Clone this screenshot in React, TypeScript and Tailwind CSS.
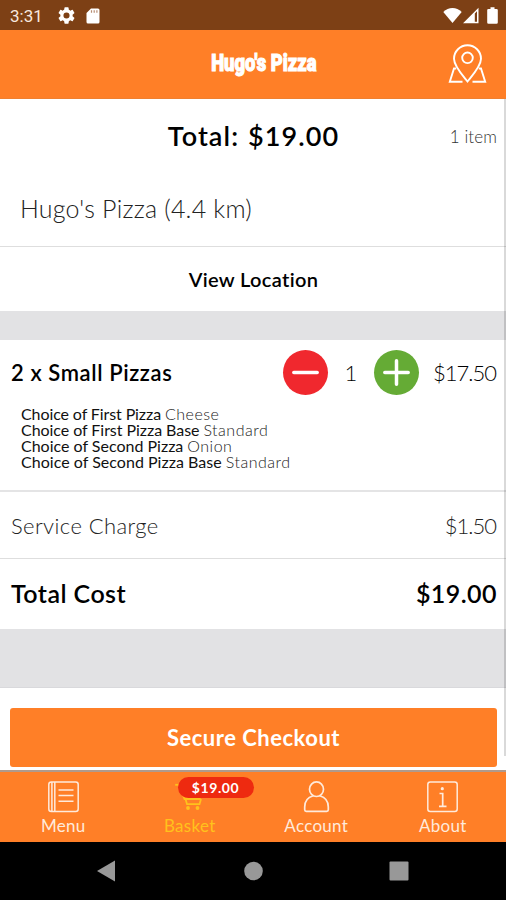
import type { ReactNode } from "react";

const choices = [
  { label: "Choice of First Pizza", value: "Cheese", spacing: "tracking-[-0.1px]" },
  { label: "Choice of First Pizza Base", value: "Standard", spacing: "tracking-[-0.05px]" },
  { label: "Choice of Second Pizza", value: "Onion", spacing: "tracking-[0px]" },
  { label: "Choice of Second Pizza Base", value: "Standard", spacing: "tracking-[0.03px]" },
];

function StatusBar() {
  return (
    <div className="flex h-[30px] items-center bg-[#7d4015] pr-[8px] pl-[10px] text-white">
      <span className="w-[48px] pt-[2px] font-[Roboto] text-[17px] leading-none text-[#f8e8df]">3:31</span>
      <svg className="mt-[1px]" width="17" height="17" viewBox="2 2 20 20" fill="currentColor">
        <path fillRule="evenodd" d="M19.14 12.94c.04-.3.06-.61.06-.94s-.02-.64-.07-.94l2.03-1.58a.49.49 0 0 0 .12-.61l-1.92-3.32a.49.49 0 0 0-.59-.22l-2.39.96a7 7 0 0 0-1.62-.94l-.36-2.54a.48.48 0 0 0-.48-.41h-3.84a.48.48 0 0 0-.47.41l-.36 2.54c-.59.24-1.13.57-1.62.94l-2.39-.96a.48.48 0 0 0-.59.22L2.73 8.87a.48.48 0 0 0 .12.61l2.03 1.58a7 7 0 0 0 0 1.88l-2.03 1.58a.49.49 0 0 0-.12.61l1.92 3.32c.12.22.37.29.59.22l2.39-.96c.5.38 1.03.7 1.62.94l.36 2.54c.05.24.24.41.48.41h3.84c.24 0 .44-.17.47-.41l.36-2.54a7 7 0 0 0 1.62-.94l2.39.96c.22.08.47 0 .59-.22l1.92-3.32a.48.48 0 0 0-.12-.61zM12 15.6A3.6 3.6 0 1 1 12 8.4a3.6 3.6 0 0 1 0 7.2z" />
      </svg>
      <svg className="mt-[1px] ml-[11px]" width="14" height="16" viewBox="0 0 14 16">
        <path d="M5 .5H12Q13.5 .5 13.5 2V14Q13.5 15.5 12 15.5H2Q.5 15.5 .5 14V5Z" fill="currentColor" />
        <path d="M5.5 2.3v2.4M8.2 2.3v2.4M10.9 2.3v2.4" stroke="#b78d72" strokeWidth="1.2" />
      </svg>
      <svg className="ml-auto" width="19" height="17" viewBox="0 0 19 17" fill="currentColor">
        <path d="M9.5 16L.3 5Q4.3 1 9.5 1T18.7 5Z" />
      </svg>
      <svg className="ml-[1px]" width="16" height="17" viewBox="0 0 16 17">
        <path fillRule="evenodd" d="M15.5 .8V16.3H0ZM11.8 6.5V14.7H14V4.2Z" fill="currentColor" />
      </svg>
      <svg className="ml-[8px]" width="11" height="17" viewBox="0 0 11 17" fill="currentColor">
        <path d="M3.5 .3h4v1.6h2Q10.8 1.9 10.8 3.1V15.4Q10.8 16.7 9.5 16.7h-8Q.2 16.7 .2 15.4V3.1Q.2 1.9 1.5 1.9h2Z" />
      </svg>
    </div>
  );
}

function Header() {
  return (
    <header className="grid h-[69px] grid-cols-[1fr_auto_1fr] items-center border-b border-[#ef8030] bg-[#ff7f27] text-white">
      <span />
      <h1 className="flex w-[132px] justify-center pl-[21px] font-[Roboto] text-[23px] font-black whitespace-nowrap [-webkit-text-stroke:1.1px_white]">
        <span className="scale-x-[0.8]">Hugo's Pizza</span>
      </h1>
      <svg className="mr-[19px] justify-self-end" width="39" height="40" viewBox="0 0 39 40" fill="none" stroke="white" strokeWidth="1.9">
        <path d="M19.5 37.5C16 33 6 22.5 6 14.8a13.5 13.5 0 0 1 27 0C33 22.5 23 33 19.5 37.5Z" />
        <circle cx="19.5" cy="13.8" r="5.3" />
        <path d="M8.2 24.5H6L1.8 37.7H14.5M30.8 24.5H33L37.2 37.7H24.5" />
      </svg>
    </header>
  );
}

function RoundButton({ color, label, plus }: { color: string; label: string; plus?: boolean }) {
  return (
    <button aria-label={label} className={`flex size-[45px] items-center justify-center rounded-full ${color}`}>
      <svg width="27" height="27" viewBox="0 0 27 27" stroke="white" strokeWidth="3.5" strokeLinecap="round">
        <path d={plus ? "M1.8 13.5h23.4M13.5 1.8v23.4" : "M1.8 13.5h23.4"} />
      </svg>
    </button>
  );
}

function Tab({ label, active, children }: { label: string; active?: boolean; children: ReactNode }) {
  return (
    <div className={`relative flex flex-1 flex-col items-center pt-[9px] ${active ? "text-[#ffc21c]" : "text-[#ffeadb]"}`}>
      {children}
      <span className="mt-[3px] text-[17px] leading-[20px] tracking-[0.3px]">{label}</span>
    </div>
  );
}

export default function App() {
  return (
    <div className="flex h-[900px] w-[506px] flex-col overflow-hidden bg-white font-[Lato,sans-serif] text-black">
      <StatusBar />
      <Header />
      <main className="relative h-[671px]">
        <section className="flex h-[148px] flex-col border-b border-[#dedede]">
          <div className="grid h-[74px] grid-cols-[1fr_auto_1fr] items-center pr-[9px]">
            <span />
            <h2 className="-mr-[10px] text-[27px] font-semibold tracking-[1.1px] [word-spacing:1px]">Total: $19.00</h2>
            <span className="pt-[2px] text-right text-[17px] font-light tracking-[0.1px] text-[#333]">1 item</span>
          </div>
          <p className="pt-[17px] pl-[20px] text-[25px] font-light tracking-[0.2px] text-[#222]">Hugo's Pizza (4.4 km)</p>
        </section>
        <section className="flex h-[64px] items-center justify-center pb-[1px] pl-[1px] text-[20px] font-semibold tracking-[0.35px]">View Location</section>
        <div className="h-[29px] bg-[#e2e2e4]" />
        <section className="h-[152px] border-b-2 border-[#e4e4e5] pt-[10px]">
          <div className="flex items-center pr-[9px] pl-[11px]">
            <h3 className="w-[272px] text-[22px] font-semibold tracking-[0.6px]">2 x Small Pizzas</h3>
            <RoundButton color="bg-[#f0282e]" label="Remove one" />
            <span className="w-[46px] text-center text-[22px] font-light">1</span>
            <RoundButton color="bg-[#65ab35]" label="Add one" plus />
            <span className="mr-[1px] ml-auto pb-[1px] text-[22px] font-light tracking-[-1px]">$17.50</span>
          </div>
          <ul className="pt-[11px] pl-[21px] text-[16px] leading-[16px] whitespace-nowrap text-[#111]">
            {choices.map((choice) => (
              <li key={choice.label} className="flex gap-[4px]">
                <span className={choice.spacing}>{choice.label}</span>
                <span className="font-light tracking-[0.5px] text-[#222]">{choice.value}</span>
              </li>
            ))}
          </ul>
        </section>
        <div className="flex h-[67px] items-center justify-between border-b border-[#dedede] pr-[9px] pl-[11px] text-[22px] font-light text-[#222]">
          <span className="tracking-[0.4px]">Service Charge</span>
          <span className="mr-[1px] tracking-[-1px]">$1.50</span>
        </div>
        <div className="flex h-[70px] items-center justify-between pr-[9px] pl-[11px] text-[25px] font-semibold tracking-[0.45px]">
          <span>Total Cost</span>
          <span>$19.00</span>
        </div>
        <div className="h-[59px] border-b border-[#d9d9dc] bg-[#e2e2e4]" />
        <div className="pt-[20px] pr-[9px] pl-[10px]">
          <button className="flex h-[59px] w-full items-center justify-center rounded-[3px] bg-[#ff7f27] text-[22px] font-bold tracking-[0.5px] text-white">Secure Checkout</button>
        </div>
        <div className="absolute top-0 right-0 h-[657px] w-[2px] bg-black/15" />
      </main>
      <nav className="flex h-[72px] border-t-2 border-[#b09a8c] bg-[#ff7f27]">
        <Tab label="Menu">
          <svg width="31" height="32" viewBox="0 0 31 32" fill="none" stroke="currentColor" strokeWidth="1.5">
            <rect x=".8" y="1" width="29.4" height="29.5" rx="2.5" />
            <path d="M3.9 1v29.5M6.8 1v29.5M10.5 8.9h15M10.5 14.5h15M10.5 20.2h15" />
          </svg>
        </Tab>
        <Tab label="Basket" active>
          <svg width="31" height="32" viewBox="0 0 31 32" fill="none" stroke="currentColor" strokeWidth="1.8">
            <path d="M1.2 3.8h3.2" />
            <path d="M9 14L10.5 18H25.5L27 14M11.5 18L13 23.2H25.5L27 18" />
            <circle cx="14" cy="27" r="1.9" fill="currentColor" stroke="none" />
            <circle cx="23.5" cy="27" r="1.9" fill="currentColor" stroke="none" />
          </svg>
          <span className="absolute top-[5px] left-[51px] flex h-[21px] w-[76px] items-center justify-center rounded-full bg-[#ee2a10] text-[14px] font-bold tracking-[0.6px] text-white">$19.00</span>
        </Tab>
        <Tab label="Account">
          <svg width="31" height="32" viewBox="0 0 31 32" fill="none" stroke="currentColor" strokeWidth="1.7">
            <ellipse cx="15.5" cy="8.2" rx="7" ry="7.3" />
            <path d="M12.2 14.8C7 16.3 3.7 20.5 3.7 26v2.8q0 1.6 1.6 1.6h20.4q1.6 0 1.6-1.6V26c0-5.5-3.3-9.7-8.5-11.2" />
          </svg>
        </Tab>
        <Tab label="About">
          <svg width="31" height="32" viewBox="0 0 31 32" fill="none" stroke="currentColor" strokeWidth="1.5">
            <rect x=".8" y="1" width="29.4" height="29.5" rx="2.5" />
            <path d="M12.5 12.5h3.2v12.8M12 25.3h7.5" strokeWidth="1.7" />
            <circle cx="15.3" cy="7.7" r="1.6" fill="currentColor" stroke="none" />
          </svg>
        </Tab>
      </nav>
      <div className="h-[58px] bg-black">
        <svg width="506" height="58" viewBox="0 0 506 58" fill="#989898">
          <path d="M97 29L115 18.5V39.5Z" />
          <circle cx="253.5" cy="29" r="9.3" />
          <rect x="389.5" y="19.5" width="19" height="19" rx="1" />
        </svg>
      </div>
    </div>
  );
}
